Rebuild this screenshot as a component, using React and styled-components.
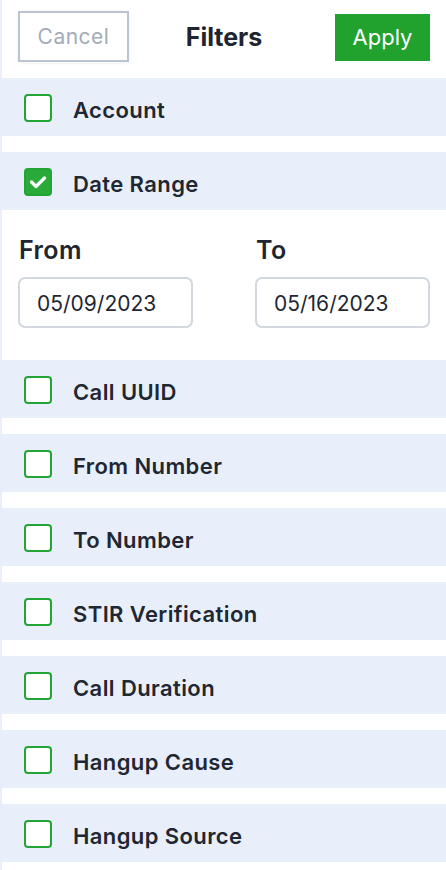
import React from "react";
import styled, { createGlobalStyle } from "styled-components";

const Global = createGlobalStyle`
  html, body { margin: 0; padding: 0; background: #fff; }
  body { font-family: Inter, "Open Sans", sans-serif; }
`;

const Page = styled.div`
  width: 446px;
  min-height: 870px;
  box-sizing: border-box;
  border-left: 2px solid #e8effa;
  background: #fff;
  display: flex;
  flex-direction: column;
`;

const Header = styled.div`
  height: 78px;
  display: flex;
  align-items: center;
  justify-content: space-between;
  padding: 0 16px 0 16px;
  box-sizing: border-box;
`;

const CancelButton = styled.button`
  width: 111px;
  height: 51px;
  margin-top: -6px;
  border: 2px solid #b9c3d1;
  background: #fff;
  color: #a2acba;
  font-family: Inter, sans-serif;
  font-size: 21px;
  font-weight: 400;
  letter-spacing: 0.5px;
  padding: 0;
  box-shadow: 0 1px 4px rgba(0, 0, 0, 0.06);
`;

const Title = styled.h1`
  margin: -4px 16px 0 0;
  font-size: 25px;
  font-weight: 700;
  color: #1e2530;
`;

const ApplyButton = styled.button`
  width: 95px;
  height: 47px;
  margin-top: -4px;
  border: none;
  background: #21a12e;
  color: #fff;
  font-family: Inter, sans-serif;
  font-size: 22px;
  font-weight: 400;
  padding: 0;
`;

const List = styled.div`
  display: flex;
  flex-direction: column;
`;

const Row = styled.div`
  height: 58px;
  background: #e8effa;
  display: flex;
  align-items: center;
  padding-left: 22px;
  gap: 21px;
  margin-bottom: ${(p) => (p.$last ? "0" : "16px")};
`;

const Box = styled.span`
  width: 28px;
  height: 28px;
  margin-top: 2px;
  box-sizing: border-box;
  border-radius: 4px;
  border: 2px solid #22a535;
  background: ${(p) => (p.$checked ? "#2aaa3a" : "#fff")};
  display: flex;
  align-items: center;
  justify-content: center;
`;

const Label = styled.span`
  font-size: 22px;
  font-weight: 600;
  letter-spacing: 0.4px;
  color: #1f2733;
  padding-top: 5px;
`;

const DateSection = styled.div`
  height: 150px;
  display: grid;
  grid-template-columns: 175px 175px;
  column-gap: 62px;
  padding: 21px 0 0 16px;
  box-sizing: border-box;
`;

const Field = styled.div`
  display: flex;
  flex-direction: column;
`;

const FieldLabel = styled.label`
  font-size: 25px;
  font-weight: 600;
  letter-spacing: 0.4px;
  color: #1e2530;
  height: 46px;
  line-height: 38px;
  margin-left: 1px;
`;

const DateBox = styled.div`
  height: 51px;
  box-sizing: border-box;
  border: 2px solid #d3d8de;
  border-radius: 7px;
  display: flex;
  align-items: center;
  padding: 2px 0 0 17px;
  font-size: 21px;
  color: #1f2733;
`;

function Check({ checked }) {
  return (
    <Box $checked={checked}>
      {checked && (
        <svg width="18" height="14" viewBox="0 0 18 14">
          <path d="M2.5 7 L7 11.5 L15.5 3" fill="none" stroke="#fff" strokeWidth="3.2" strokeLinecap="round" strokeLinejoin="round" />
        </svg>
      )}
    </Box>
  );
}

const rest = [
  "Call UUID",
  "From Number",
  "To Number",
  "STIR Verification",
  "Call Duration",
  "Hangup Cause",
  "Hangup Source",
];

export default function App() {
  return (
    <>
      <Global />
      <Page>
        <Header>
          <CancelButton>Cancel</CancelButton>
          <Title>Filters</Title>
          <ApplyButton>Apply</ApplyButton>
        </Header>
        <List>
          <Row>
            <Check />
            <Label>Account</Label>
          </Row>
          <Row $last>
            <Check checked />
            <Label>Date Range</Label>
          </Row>
          <DateSection>
            <Field>
              <FieldLabel>From</FieldLabel>
              <DateBox>05/09/2023</DateBox>
            </Field>
            <Field>
              <FieldLabel>To</FieldLabel>
              <DateBox>05/16/2023</DateBox>
            </Field>
          </DateSection>
          {rest.map((r) => (
            <Row key={r}>
              <Check />
              <Label>{r}</Label>
            </Row>
          ))}
        </List>
      </Page>
    </>
  );
}
